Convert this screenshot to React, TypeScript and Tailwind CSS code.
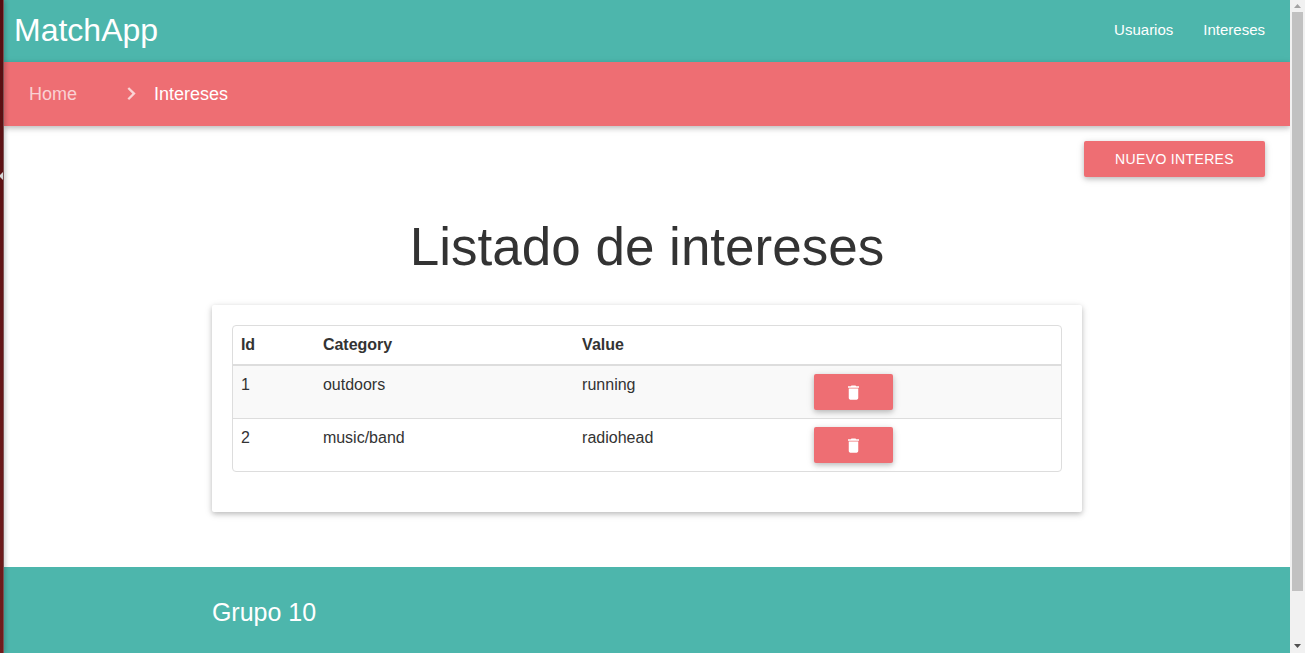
import { MdDelete } from "react-icons/md";

interface Interes {
  id: number;
  category: string;
  value: string;
}

const intereses: Interes[] = [
  { id: 1, category: "outdoors", value: "running" },
  { id: 2, category: "music/band", value: "radiohead" },
];

const raised = "shadow-[0_2px_5px_0_rgba(0,0,0,0.18),0_2px_8px_0_rgba(0,0,0,0.12)]";

function SidePanelEdge() {
  return (
    <div className="relative z-10 w-1 shrink-0 border-r border-[#7b5052] bg-linear-to-b from-[#560d11] to-[#701c1c] shadow-[1px_0_5px_rgba(0,0,0,0.28)]">
      <svg viewBox="0 0 3 8" className="absolute top-[172px] left-0 h-2 w-[3px]" aria-hidden="true">
        <path d="M3 0v8L0 5V3z" fill="#d6d6d6" />
      </svg>
    </div>
  );
}

function Scrollbar() {
  return (
    <div className="flex w-[15px] shrink-0 flex-col items-center bg-[#f1f1f1]" aria-hidden="true">
      <svg viewBox="0 0 15 12" className="h-3 w-[15px]">
        <path d="M4 8L7.500 4L11 8z" fill="#a3a3a3" />
      </svg>
      <div className="flex w-full flex-1 flex-col px-[2px]">
        <div className="h-[92%] bg-[#c1c1c1]" />
      </div>
      <svg viewBox="0 0 15 12" className="h-3 w-[15px]">
        <path d="M4 3L7.500 7L11 3z" fill="#505050" />
      </svg>
    </div>
  );
}

function Header() {
  return (
    <header>
      <nav className="flex h-[62px] items-start justify-between bg-[#4db6ac] pr-[25px] pl-[10px] text-white">
        <a href="#" className="text-[32px] leading-[60px]">
          MatchApp
        </a>
        <ul className="flex gap-[30px] text-[15px] leading-[60px]">
          <li>
            <a href="#usuarios">Usuarios</a>
          </li>
          <li>
            <a href="#intereses">Intereses</a>
          </li>
        </ul>
      </nav>
      <nav
        aria-label="breadcrumb"
        className={`flex h-16 items-center bg-[#ee6e73] pl-[25px] text-[18px] text-white ${raised}`}
      >
        <a href="#" className="w-[90px] text-white/70">
          Home
        </a>
        <svg viewBox="0 0 24 24" className="mr-[11px] size-6 text-white/70" aria-hidden="true">
          <path d="M9.300 6L15 11.600L9.300 17.200" fill="none" stroke="currentColor" strokeWidth="2.300" />
        </svg>
        <a href="#intereses">Intereses</a>
      </nav>
    </header>
  );
}

function InteresesTable() {
  return (
    <div className="overflow-hidden rounded border border-[#dddddd]">
      <table className="w-full table-fixed border-collapse text-left text-[16px] leading-[22px]">
        <colgroup>
          <col className="w-[9.9%]" />
          <col className="w-[31.3%]" />
          <col className="w-[28%]" />
          <col />
        </colgroup>
        <thead>
          <tr className="border-b-2 border-[#dddddd]">
            <th className="p-2 font-bold">Id</th>
            <th className="p-2 font-bold">Category</th>
            <th className="p-2 font-bold">Value</th>
            <td className="p-2" />
          </tr>
        </thead>
        <tbody>
          {intereses.map((interes) => (
            <tr
              key={interes.id}
              className="border-b border-[#dddddd] align-top odd:bg-[#f9f9f9] last:border-b-0"
            >
              <td className="p-2">{interes.id}</td>
              <td className="p-2">{interes.category}</td>
              <td className="p-2">{interes.value}</td>
              <td className="p-2">
                <button
                  type="button"
                  aria-label={`Eliminar ${interes.value}`}
                  className={`flex h-9 w-[79px] items-center justify-center rounded-[2px] bg-[#ee6e73] text-white ${raised}`}
                >
                  <MdDelete className="size-[19px]" />
                </button>
              </td>
            </tr>
          ))}
        </tbody>
      </table>
    </div>
  );
}

export default function App() {
  return (
    <div className="flex min-h-screen bg-white font-['Liberation_Sans',Arial,sans-serif] text-[#333333]">
      <SidePanelEdge />
      <div className="flex min-w-0 flex-1 flex-col">
        <Header />
        <main className="pb-[55px]">
          <div className="flex justify-end pt-[15px] pr-[25px]">
            <button
              type="button"
              className={`h-9 rounded-[2px] bg-[#ee6e73] px-[31px] text-[14px] tracking-wide text-white uppercase ${raised}`}
            >
              Nuevo interes
            </button>
          </div>
          <h1 className="mt-10 text-center text-[53px] leading-[60px]">Listado de intereses</h1>
          <div className="mx-auto mt-7 w-[70%] px-[15px]">
            <section className={`rounded-[2px] bg-white px-5 pt-5 pb-10 ${raised}`}>
              <InteresesTable />
            </section>
          </div>
        </main>
        <footer className="flex-1 bg-[#4db6ac] pt-[30px] text-white">
          <div className="mx-auto w-[70%] px-[15px]">
            <h2 className="text-[25px] leading-[30px]">Grupo 10</h2>
          </div>
        </footer>
      </div>
      <Scrollbar />
    </div>
  );
}
